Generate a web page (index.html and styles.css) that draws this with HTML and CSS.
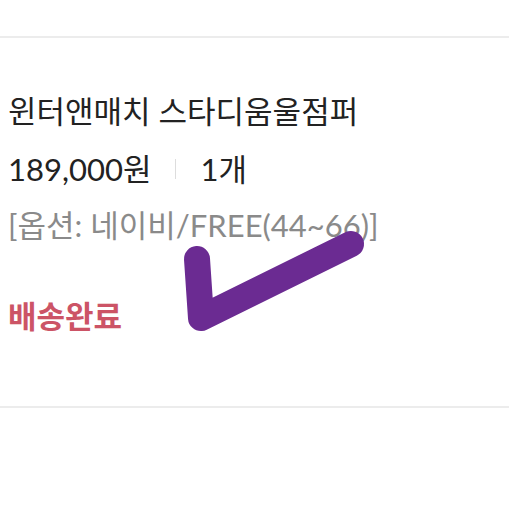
FILE: index.html
```html
<!DOCTYPE html>
<html lang="ko">
<head>
  <meta charset="UTF-8">
  <meta name="viewport" content="width=device-width, initial-scale=1.0">
  <title>주문 내역</title>
  <link rel="stylesheet" href="styles.css">
</head>
<body>
  <div class="page">
    <div class="top-space"></div>
    <div class="order-item">
      <p class="item-name">윈터앤매치 스타디움울점퍼</p>
      <p class="item-price">189,000원<span class="divider"></span>1개</p>
      <p class="item-option">[옵션: 네이비/FREE(44~66)]</p>
      <p class="item-status">배송완료</p>
    </div>

    <!-- hand-drawn check over the item -->
    <svg class="check-mark" width="509" height="509" viewBox="0 0 509 509">
      <path d="M197 259 L201 318 L351 244" fill="none" stroke="#6b2b92" stroke-width="26" stroke-linecap="round" stroke-linejoin="round"/>
    </svg>
  </div>
</body>
</html>
```

FILE: styles.css
```css
body {
  margin: 0;
  padding: 0;
  background-color: #fff;
  font-family: Lato, "Noto Sans CJK KR", sans-serif;
  color: #222;
}

.page {
  position: relative;
  width: 509px;
  height: 509px;
  overflow: hidden;
}

.top-space {
  height: 36px;
}

.order-item {
  border-top: 2px solid #ececec;
  border-bottom: 2px solid #ececec;
  padding: 0 0 70px 8px;
}

.order-item p {
  margin: 0;
  font-size: 31px;
  line-height: 40px;
  white-space: nowrap;
}

.item-name {
  margin-top: 53px !important;
}

.item-price {
  margin-top: 18px !important;
  display: flex;
  align-items: center;
}

.divider {
  display: inline-block;
  width: 1px;
  height: 20px;
  background-color: #ddd;
  margin: 0 24px 0 24px;
}

.item-option {
  margin-top: 16px !important;
  color: #8a8a8a;
}

.item-status {
  margin-top: 51px !important;
  color: #cc5466;
  font-weight: bold;
}

.check-mark {
  position: absolute;
  left: 0;
  top: 0;
}
```
